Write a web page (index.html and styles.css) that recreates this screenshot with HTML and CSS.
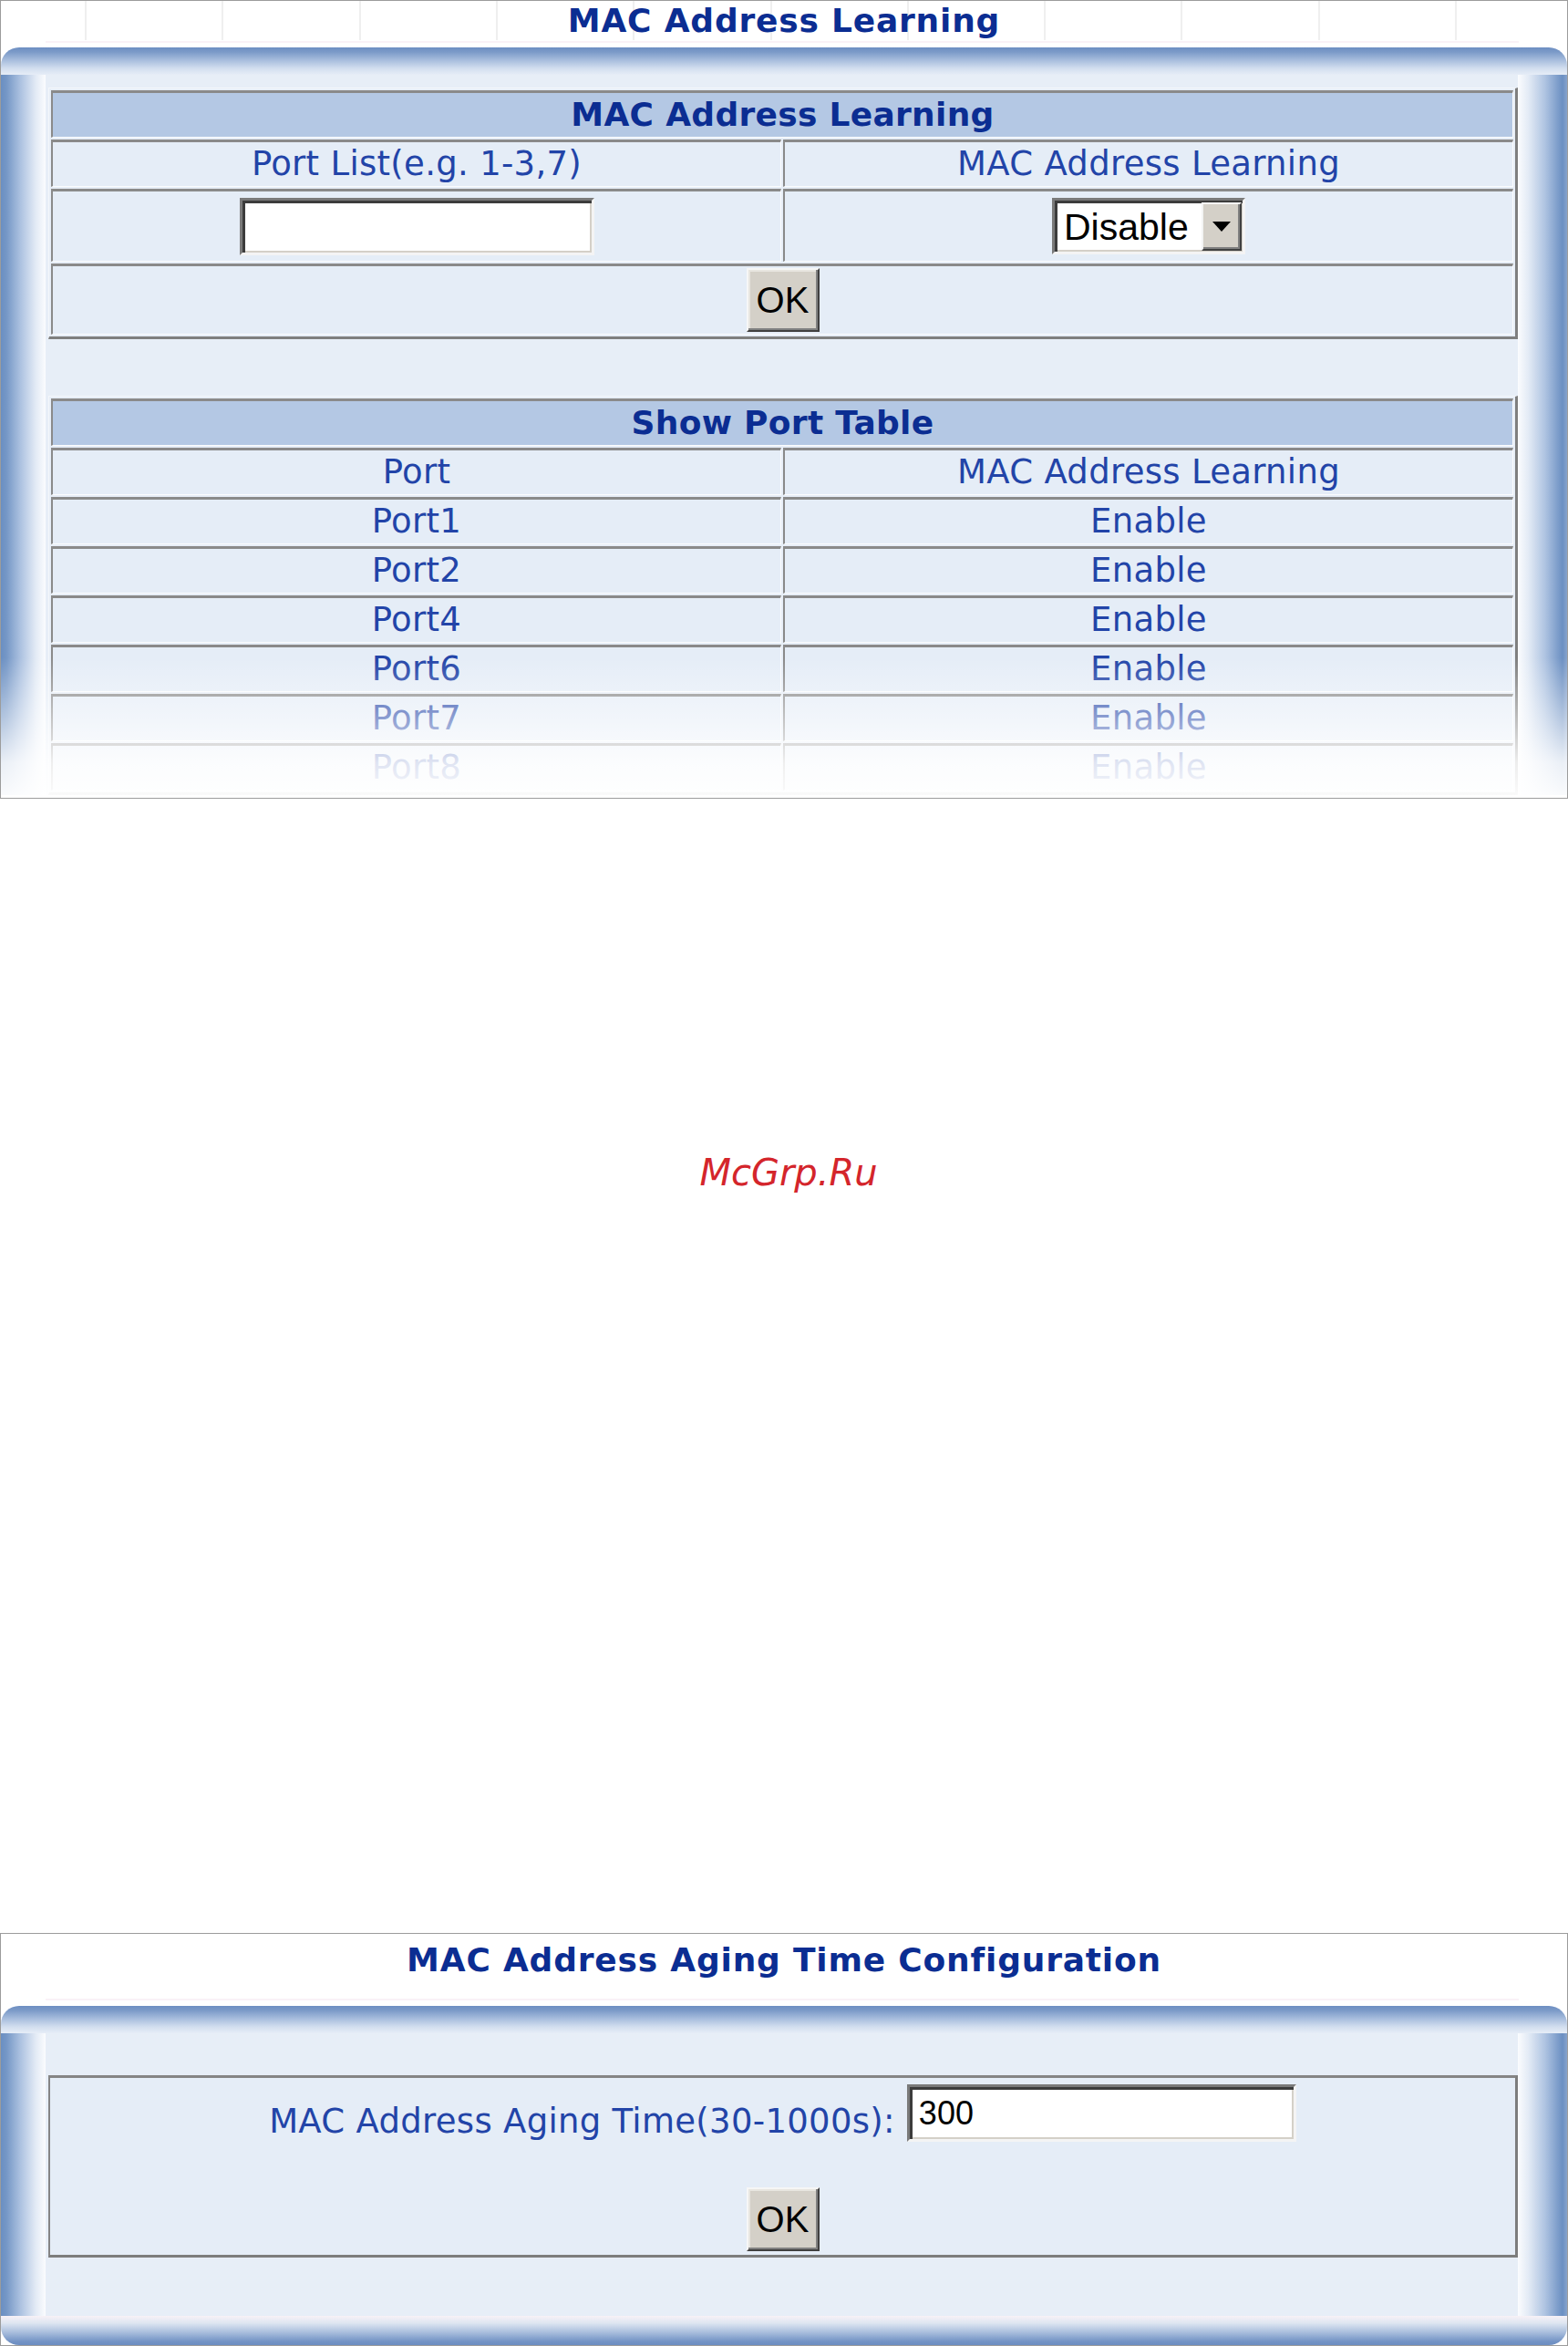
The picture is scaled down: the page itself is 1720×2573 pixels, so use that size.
FILE: index.html
```html
<!DOCTYPE html>
<html>

	<head>
		<meta charset="UTF-8">
		<title>MAC Address Learning</title>
		<link rel="stylesheet" href="styles.css">
	</head>

	<body>

		<div class="panel panel-top">
			<div class="panel-title">MAC Address Learning</div>
			<div class="frame">
				<div class="frame-body">
					<form>
						<table class="tbl">
							<tr>
								<td colspan="2" class="hd">MAC Address Learning</td>
							</tr>
							<tr>
								<td>Port List(e.g. 1-3,7)</td>
								<td>MAC Address Learning</td>
							</tr>
							<tr>
								<td>
									<div class="ctl"><input class="text-in" type="text"></div>
								</td>
								<td>
									<div class="ctl">
										<span class="select-box">
											<select class="sel">
												<option>Disable</option>
												<option>Enable</option>
											</select>
											<span class="sel-btn"></span>
										</span>
									</div>
								</td>
							</tr>
							<tr>
								<td colspan="2">
									<div class="ctl ctl-ok"><input class="btn" type="button" value="OK"></div>
								</td>
							</tr>
						</table>
					</form>

					<table class="tbl tbl-ports">
						<tr>
							<td colspan="2" class="hd">Show Port Table</td>
						</tr>
						<tr>
							<td>Port</td>
							<td>MAC Address Learning</td>
						</tr>
						<tr><td>Port1</td><td>Enable</td></tr>
						<tr><td>Port2</td><td>Enable</td></tr>
						<tr><td>Port4</td><td>Enable</td></tr>
						<tr><td>Port6</td><td>Enable</td></tr>
						<tr><td>Port7</td><td>Enable</td></tr>
						<tr><td>Port8</td><td>Enable</td></tr>
					</table>
				</div>
			</div>
			<div class="fade"></div>
		</div>

		<div class="watermark">McGrp.Ru</div>

		<div class="panel panel-bottom">
			<div class="panel-title">MAC Address Aging Time Configuration</div>
			<div class="frame">
				<div class="frame-body">
					<form class="aging">
						<div class="aging-row">
							<span class="aging-label">MAC Address Aging Time(30-1000s):</span>
							<input class="text-in aging-in" type="text" value="300">
						</div>
						<div class="aging-ok"><input class="btn" type="button" value="OK"></div>
					</form>
				</div>
			</div>
		</div>

	</body>

</html>
```

FILE: styles.css
```css
* {
	margin: 0;
	padding: 0;
}

body {
	background: white;
	font-family: "DejaVu Sans", Verdana, sans-serif;
	color: #2244a8;
}

.panel {
	border: 1px solid #9c9c9c;
	background: white;
}

.panel-top {
	position: relative;
	height: 876px;
	box-sizing: border-box;
	overflow: hidden;
}

.panel-title {
	text-align: center;
	font-weight: bold;
	font-size: 36px;
	letter-spacing: 0.8px;
	line-height: 44px;
	color: #0b2d92;
}

/* faint grid behind the top title */
.panel-top .panel-title {
	height: 51px;
	background:
		linear-gradient(#faf2f7, #faf2f7) 49px 44px / calc(100% - 102px) 2px no-repeat,
		repeating-linear-gradient(to right, transparent 0, transparent 92px, #efefef 92px, #efefef 94px, transparent 94px, transparent 150.3px) 0 0 / 100% 43px no-repeat;
}

.panel-bottom {
	margin-top: 810px;
}

.panel-bottom .panel-title {
	height: 72px;
	padding-top: 7px;
	background: linear-gradient(#faf2f7, #faf2f7) 49px 71px / calc(100% - 102px) 2px no-repeat;
}

.frame {
	border-radius: 20px 20px 0 0;
	padding: 30px 54px 0 49px;
	background:
		linear-gradient(to bottom, #6d8ec2 0, #7b9ac8 5px, #a7bddd 14px, #d2deef 23px, #e6edf7 30px) 0 0 / 100% 30px no-repeat,
		linear-gradient(to right, #6a8fc2 0, #7597c6 6px, #aec3e1 22px, #e2eaf5 38px, #fbfcfe 49px, #fbfcfe calc(100% - 54px), #e2eaf5 calc(100% - 42px), #aec3e1 calc(100% - 24px), #6b8fc2 calc(100% - 5px), #86a3cd 100%);
}

.panel-bottom .frame {
	border-radius: 20px;
	padding-bottom: 32px;
	background:
		linear-gradient(to bottom, #6d8ec2 0, #7b9ac8 5px, #a7bddd 14px, #d2deef 23px, #e6edf7 30px) 0 0 / 100% 30px no-repeat,
		linear-gradient(to bottom, #f8f1f6 0, #dde5f1 8px, #a9bedd 18px, #7393c5 28px, #6c8dc1 32px) 0 100% / 100% 32px no-repeat,
		linear-gradient(to right, #6a8fc2 0, #7597c6 6px, #aec3e1 22px, #e2eaf5 38px, #fbfcfe 49px, #fbfcfe calc(100% - 54px), #e2eaf5 calc(100% - 42px), #aec3e1 calc(100% - 24px), #6b8fc2 calc(100% - 5px), #86a3cd 100%);
}

.frame-body {
	background: #e7eef7;
	padding: 14px 0 0 3px;
}

.panel-bottom .frame-body {
	padding: 46px 0 64px 3px;
}

.tbl {
	width: 100%;
	table-layout: fixed;
	border-collapse: separate;
	border-spacing: 2px;
	border-style: solid;
	border-width: 1px 3px 3px 1px;
	border-color: #f4f7fb #7f7f7f #7f7f7f #f4f7fb;
}

.tbl td {
	border-style: solid;
	border-width: 3px 1px 1px 2px;
	border-color: #8a8a8a #fbfcfe #fbfcfe #8a8a8a;
	background: #e5edf7;
	text-align: center;
	font-size: 37px;
	letter-spacing: 0.3px;
	line-height: 48px;
	padding: 0;
}

.tbl .hd {
	background: #b4c8e4;
	font-weight: bold;
	font-size: 36px;
	color: #0b2d92;
}

.tbl-ports {
	margin-top: 62px;
}

.ctl {
	display: flex;
	justify-content: center;
	align-items: center;
	height: 76px;
}

.ctl-ok {
	height: 74px;
}

.text-in {
	width: 389px;
	height: 63px;
	box-sizing: border-box;
	border: 3px solid;
	border-color: #7a7a7a #f4f4f4 #f4f4f4 #7a7a7a;
	box-shadow: inset 3px 3px 0 #3c3c3c, inset -2px -2px 0 #d4d0c8;
	background: white;
	padding: 0 10px;
	font: 36px "Liberation Sans", Arial, sans-serif;
	color: black;
	outline: none;
}

.select-box {
	display: inline-flex;
	width: 212px;
	height: 62px;
	box-sizing: border-box;
	border: 3px solid;
	border-color: #7a7a7a #f4f4f4 #f4f4f4 #7a7a7a;
	box-shadow: inset 3px 3px 0 #3c3c3c, inset -2px -2px 0 #d4d0c8;
	background: white;
	padding: 2px 1px 1px 2px;
}

.sel {
	flex: 1;
	min-width: 0;
	-webkit-appearance: none;
	appearance: none;
	border: none;
	background: transparent;
	font: 41px "Liberation Sans", Arial, sans-serif;
	color: black;
	padding-left: 8px;
	outline: none;
}

.sel-btn {
	width: 44px;
	box-sizing: border-box;
	background: #d4d0c8;
	border: 2px solid;
	border-color: #f4f4f4 #404040 #404040 #f4f4f4;
	box-shadow: inset -2px -2px 0 #808080;
	display: flex;
	align-items: center;
	justify-content: center;
}

.sel-btn::after {
	content: "";
	border-left: 10px solid transparent;
	border-right: 10px solid transparent;
	border-top: 11px solid black;
}

.btn {
	width: 80px;
	height: 70px;
	box-sizing: border-box;
	background: #d4d0c8;
	border: 2px solid;
	border-color: #f6f6f6 #404040 #404040 #f6f6f6;
	box-shadow: inset -2px -2px 0 #808080, inset 2px 2px 0 #e8e6e0;
	font: 40px "Liberation Sans", Arial, sans-serif;
	color: black;
}

.fade {
	position: absolute;
	left: 0;
	right: 0;
	top: 720px;
	bottom: 0;
	background: linear-gradient(to bottom, rgba(255, 255, 255, 0), rgba(255, 255, 255, 0.5) 45%, rgba(255, 255, 255, 0.86) 75%, rgba(255, 255, 255, 0.97));
}

.watermark {
	margin-top: 386px;
	padding-left: 10px;
	text-align: center;
	font: italic 40px/48px "DejaVu Sans", sans-serif;
	color: #d4252b;
}

.aging {
	border-style: solid;
	border-width: 3px 3px 3px 2px;
	border-color: #858585 #7d7d7d #7d7d7d #858585;
	background: #e5edf7;
	padding: 7px 0 4px;
}

.aging-row {
	display: flex;
	justify-content: center;
	align-items: flex-end;
	gap: 13px;
	height: 63px;
}

.aging-label {
	font-size: 37px;
	letter-spacing: 0.3px;
	line-height: 44px;
}

.aging-in {
	width: 427px;
}

.aging-ok {
	display: flex;
	justify-content: center;
	margin-top: 50px;
}
```
